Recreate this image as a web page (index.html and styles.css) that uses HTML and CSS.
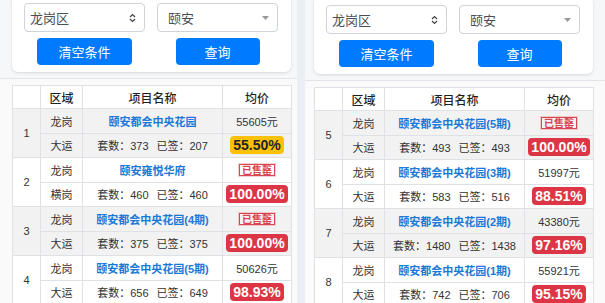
FILE: index.html
```html
<!DOCTYPE html>
<html lang="zh-CN">

<head>
    <meta charset="UTF-8">
    <meta name="viewport" content="width=device-width, initial-scale=1.0">
    <title>楼盘备案查询</title>
    <link rel="stylesheet" href="styles.css">
</head>

<body>
    <!-- Left screen -->
    <div class="panel panel-left">
        <div class="filter-card">
            <div class="filter-row">
                <div class="select">
                    <span>龙岗区</span>
                    <svg class="icon-updown" width="7" height="10" viewBox="0 0 7 10"><path d="M1 4 L3.5 1.5 L6 4 M1 6 L3.5 8.5 L6 6" fill="none" stroke="#444" stroke-width="1.2"/></svg>
                </div>
                <div class="select select-picker">
                    <span>颐安</span>
                    <svg class="icon-caret" width="7" height="4" viewBox="0 0 7 4"><path d="M0 0 H7 L3.5 4 Z" fill="#999"/></svg>
                </div>
            </div>
            <div class="filter-row">
                <div class="btn-cell"><button class="btn btn-clear">清空条件</button></div>
                <div class="btn-cell"><button class="btn btn-query">查询</button></div>
            </div>
        </div>

        <div class="list">
            <table class="house-table">
                <thead>
                    <tr>
                        <th class="col-no"></th>
                        <th class="col-area">区域</th>
                        <th class="col-name">项目名称</th>
                        <th class="col-price">均价</th>
                    </tr>
                </thead>
                <tbody class="striped">
                    <tr>
                        <td rowspan="2">1</td>
                        <td>龙岗</td>
                        <td><a href="#" class="name">颐安都会中央花园</a></td>
                        <td>55605元</td>
                    </tr>
                    <tr>
                        <td>大运</td>
                        <td>套数：373<span class="signed">已签：207</span></td>
                        <td><span class="badge badge-warn">55.50%</span></td>
                    </tr>
                </tbody>
                <tbody>
                    <tr>
                        <td rowspan="2">2</td>
                        <td>龙岗</td>
                        <td><a href="#" class="name">颐安雍悦华府</a></td>
                        <td><span class="stamp">已售罄</span></td>
                    </tr>
                    <tr>
                        <td>横岗</td>
                        <td>套数：460<span class="signed">已签：460</span></td>
                        <td><span class="badge badge-danger">100.00%</span></td>
                    </tr>
                </tbody>
                <tbody class="striped">
                    <tr>
                        <td rowspan="2">3</td>
                        <td>龙岗</td>
                        <td><a href="#" class="name">颐安都会中央花园(4期)</a></td>
                        <td><span class="stamp">已售罄</span></td>
                    </tr>
                    <tr>
                        <td>大运</td>
                        <td>套数：375<span class="signed">已签：375</span></td>
                        <td><span class="badge badge-danger">100.00%</span></td>
                    </tr>
                </tbody>
                <tbody>
                    <tr>
                        <td rowspan="2">4</td>
                        <td>龙岗</td>
                        <td><a href="#" class="name">颐安都会中央花园(5期)</a></td>
                        <td>50626元</td>
                    </tr>
                    <tr>
                        <td>大运</td>
                        <td>套数：656<span class="signed">已签：649</span></td>
                        <td><span class="badge badge-danger">98.93%</span></td>
                    </tr>
                </tbody>
            </table>
        </div>
    </div>

    <!-- Right screen -->
    <div class="panel panel-right">
        <div class="filter-card">
            <div class="filter-row">
                <div class="select">
                    <span>龙岗区</span>
                    <svg class="icon-updown" width="7" height="10" viewBox="0 0 7 10"><path d="M1 4 L3.5 1.5 L6 4 M1 6 L3.5 8.5 L6 6" fill="none" stroke="#444" stroke-width="1.2"/></svg>
                </div>
                <div class="select select-picker">
                    <span>颐安</span>
                    <svg class="icon-caret" width="7" height="4" viewBox="0 0 7 4"><path d="M0 0 H7 L3.5 4 Z" fill="#999"/></svg>
                </div>
            </div>
            <div class="filter-row">
                <div class="btn-cell"><button class="btn btn-clear">清空条件</button></div>
                <div class="btn-cell"><button class="btn btn-query">查询</button></div>
            </div>
        </div>

        <div class="list">
            <table class="house-table">
                <thead>
                    <tr>
                        <th class="col-no"></th>
                        <th class="col-area">区域</th>
                        <th class="col-name">项目名称</th>
                        <th class="col-price">均价</th>
                    </tr>
                </thead>
                <tbody class="striped">
                    <tr>
                        <td rowspan="2">5</td>
                        <td>龙岗</td>
                        <td><a href="#" class="name">颐安都会中央花园(5期)</a></td>
                        <td><span class="stamp">已售罄</span></td>
                    </tr>
                    <tr>
                        <td>大运</td>
                        <td>套数：493<span class="signed">已签：493</span></td>
                        <td><span class="badge badge-danger">100.00%</span></td>
                    </tr>
                </tbody>
                <tbody>
                    <tr>
                        <td rowspan="2">6</td>
                        <td>龙岗</td>
                        <td><a href="#" class="name">颐安都会中央花园(3期)</a></td>
                        <td>51997元</td>
                    </tr>
                    <tr>
                        <td>大运</td>
                        <td>套数：583<span class="signed">已签：516</span></td>
                        <td><span class="badge badge-danger">88.51%</span></td>
                    </tr>
                </tbody>
                <tbody class="striped">
                    <tr>
                        <td rowspan="2">7</td>
                        <td>龙岗</td>
                        <td><a href="#" class="name">颐安都会中央花园(2期)</a></td>
                        <td>43380元</td>
                    </tr>
                    <tr>
                        <td>大运</td>
                        <td>套数：1480<span class="signed">已签：1438</span></td>
                        <td><span class="badge badge-danger">97.16%</span></td>
                    </tr>
                </tbody>
                <tbody>
                    <tr>
                        <td rowspan="2">8</td>
                        <td>龙岗</td>
                        <td><a href="#" class="name">颐安都会中央花园(1期)</a></td>
                        <td>55921元</td>
                    </tr>
                    <tr>
                        <td>大运</td>
                        <td>套数：742<span class="signed">已签：706</span></td>
                        <td><span class="badge badge-danger">95.15%</span></td>
                    </tr>
                </tbody>
            </table>
        </div>
    </div>
</body>

</html>
```

FILE: styles.css
```css
* {
    box-sizing: border-box;
    margin: 0;
    padding: 0;
    font-family: "Liberation Sans", "Noto Sans CJK SC", sans-serif;
}

body {
    display: flex;
    gap: 8px;
    width: 605px;
    height: 303px;
    overflow: hidden;
    background: #eceef6;
}
/* Screens */

.panel {
    background: #f6f7f9;
    height: 100%;
    overflow: hidden;
}

.panel-left {
    width: 297px;
}

.panel-right {
    width: 300px;
}
/* Filter card */

.filter-card {
    background: #fff;
    border-radius: 6px;
    box-shadow: 0 1px 3px rgba(0, 0, 0, 0.13);
    padding: 8px 13px 7px 12px;
    display: flex;
    flex-direction: column;
    gap: 6px;
}

.panel-left .filter-card {
    margin: -5px 6px 0 12px;
}

.panel-right .filter-card {
    margin: -3px 12px 0 9px;
}

.filter-row {
    display: grid;
    grid-template-columns: 1fr 1fr;
    gap: 12px;
}

.select {
    height: 29px;
    border: 1px solid #ced4da;
    border-radius: 4px;
    background: #fff;
    display: flex;
    align-items: center;
    justify-content: space-between;
    padding: 0 8px 0 5px;
    font-size: 13px;
    color: #4a4f55;
}

.select-picker {
    padding-left: 10px;
}

.select span {
    font-family: "Noto Sans CJK SC", sans-serif;
}

.btn-cell {
    display: flex;
    justify-content: center;
}

.btn {
    height: 27px;
    border: none;
    border-radius: 4px;
    background: #007bff;
    color: #fff;
    font-size: 13px;
    font-family: "Noto Sans CJK SC", sans-serif;
}

.btn-clear {
    width: 95px;
}

.btn-query {
    width: 84px;
}
/* Table */

.list {
    margin-top: 6px;
    border-top: 1px solid #e2e4e8;
    background: #fafafb;
    height: 100%;
}

.panel-left .list {
    padding: 6px 6px 0 12px;
}

.panel-right .list {
    padding: 6px 12px 0 9px;
}

.house-table {
    width: 279px;
    border-collapse: collapse;
    table-layout: fixed;
    background: #fff;
    font-size: 11px;
    color: #333;
}

.house-table th,
.house-table td {
    border: 1px solid #dee2e6;
    text-align: center;
    vertical-align: middle;
    white-space: nowrap;
    padding: 0;
}

.house-table th {
    height: 23px;
    font-size: 12px;
    font-weight: 500;
    color: #1e1e1e;
}

.house-table td {
    height: 24.5px;
}

.col-no {
    width: 28px;
}

.col-area {
    width: 42px;
}

.col-name {
    width: 140px;
}

.col-price {
    width: 69px;
}

.striped td {
    background: #f2f2f3;
}

.name {
    color: #1a78d6;
    text-decoration: none;
    font-weight: bold;
    font-size: 11px;
}

.signed {
    margin-left: 8px;
}

.badge {
    display: inline-block;
    padding: 1px 3px;
    border-radius: 4px;
    font-size: 14px;
    font-weight: bold;
    line-height: 16px;
}

.badge-warn {
    background: #ffc107;
    color: #212529;
}

.badge-danger {
    background: #dc3545;
    color: #fff;
}

.stamp {
    display: inline-block;
    border: 1px solid #d9464f;
    box-shadow: 0 0 0 1px rgba(217, 70, 79, 0.25);
    color: #d9464f;
    font-size: 10px;
    line-height: 10px;
    font-weight: bold;
    padding: 0 2px;
    font-family: "Noto Sans CJK SC", sans-serif;
}
```
